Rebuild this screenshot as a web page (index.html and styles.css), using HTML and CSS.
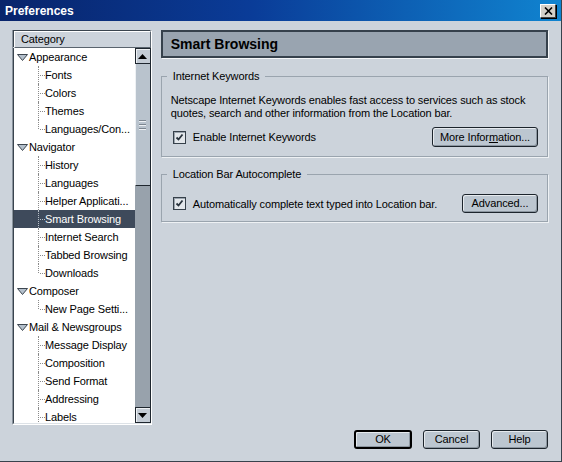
FILE: index.html
```html
<!DOCTYPE html>
<html>
<head>
<meta charset="utf-8">
<title>Preferences</title>
<link rel="stylesheet" href="styles.css">
</head>
<body>
<div class="window">
  <div class="titlebar">
    <span class="title">Preferences</span>
    <span class="close"><svg width="9" height="8" viewBox="0 0 9 8"><path d="M1 0.5 L8 7.5 M8 0.5 L1 7.5" stroke="#000" stroke-width="1.6" fill="none"/></svg></span>
  </div>
  <div class="content">
    <div class="main">
      <div class="tree">
        <div class="tree-head">Category</div>
        <div class="tree-body">
          <ul class="items">
            <li class="parent"><svg class="twisty" width="11" height="7" viewBox="0 0 11 7"><polygon points="0.5,0.5 10.5,0.5 5.5,6.5" fill="#b4c0cc" stroke="#3c4650"/></svg>Appearance</li>
            <li class="child">Fonts</li>
            <li class="child">Colors</li>
            <li class="child">Themes</li>
            <li class="child last">Languages/Con...</li>
            <li class="parent"><svg class="twisty" width="11" height="7" viewBox="0 0 11 7"><polygon points="0.5,0.5 10.5,0.5 5.5,6.5" fill="#b4c0cc" stroke="#3c4650"/></svg>Navigator</li>
            <li class="child">History</li>
            <li class="child">Languages</li>
            <li class="child">Helper Applicati...</li>
            <li class="child selected">Smart Browsing</li>
            <li class="child">Internet Search</li>
            <li class="child">Tabbed Browsing</li>
            <li class="child last">Downloads</li>
            <li class="parent"><svg class="twisty" width="11" height="7" viewBox="0 0 11 7"><polygon points="0.5,0.5 10.5,0.5 5.5,6.5" fill="#b4c0cc" stroke="#3c4650"/></svg>Composer</li>
            <li class="child last">New Page Setti...</li>
            <li class="parent"><svg class="twisty" width="11" height="7" viewBox="0 0 11 7"><polygon points="0.5,0.5 10.5,0.5 5.5,6.5" fill="#b4c0cc" stroke="#3c4650"/></svg>Mail &amp; Newsgroups</li>
            <li class="child">Message Display</li>
            <li class="child">Composition</li>
            <li class="child">Send Format</li>
            <li class="child">Addressing</li>
            <li class="child">Labels</li>
          </ul>
          <div class="scrollbar">
            <div class="sb-btn"><svg width="9" height="5" viewBox="0 0 9 5"><polygon points="4.5,0 9,5 0,5" fill="#000"/></svg></div>
            <div class="sb-thumb"><span class="grip"></span><span class="grip"></span><span class="grip"></span></div>
            <div class="sb-track"></div>
            <div class="sb-btn"><svg width="9" height="5" viewBox="0 0 9 5"><polygon points="0,0 9,0 4.5,5" fill="#000"/></svg></div>
          </div>
        </div>
      </div>
      <div class="panel">
        <div class="panel-head">Smart Browsing</div>
        <fieldset class="group g1">
          <legend>Internet Keywords</legend>
          <p class="desc">Netscape Internet Keywords enables fast access to services such as stock<br>quotes, search and other information from the Location bar.</p>
          <div class="row r1">
            <span class="check"><span class="box"><svg width="9" height="9" viewBox="0 0 9 9"><path d="M1.5 4.5 L3.5 6.5 L7.5 1.5" stroke="#28323c" stroke-width="1.8" fill="none"/></svg></span>Enable Internet Keywords</span>
            <button class="btn more">More Infor<u>m</u>ation...</button>
          </div>
        </fieldset>
        <fieldset class="group g2">
          <legend>Location Bar Autocomplete</legend>
          <div class="row r2">
            <span class="check"><span class="box"><svg width="9" height="9" viewBox="0 0 9 9"><path d="M1.5 4.5 L3.5 6.5 L7.5 1.5" stroke="#28323c" stroke-width="1.8" fill="none"/></svg></span>Automatically complete text typed into Location bar.</span>
            <button class="btn adv">Advanced...</button>
          </div>
        </fieldset>
      </div>
    </div>
    <div class="footer">
      <button class="btn default">OK</button>
      <button class="btn">Cancel</button>
      <button class="btn">Help</button>
    </div>
  </div>
</div>
</body>
</html>
```

FILE: styles.css
```css
html, body {
  margin: 0;
  padding: 0;
}
body {
  width: 562px;
  height: 462px;
  overflow: hidden;
  font-family: "Liberation Sans", Arial, sans-serif;
  font-size: 11px;
  letter-spacing: -0.12px;
  color: #000;
}
.window {
  width: 562px;
  height: 462px;
  box-sizing: border-box;
  background: #ccd3db;
  border-right: 1px solid #38424c;
  border-bottom: 1px solid #38424c;
  display: flex;
  flex-direction: column;
}
.titlebar {
  height: 21px;
  flex: none;
  background: linear-gradient(to right, #08246b 0%, #0a3c98 45%, #1084d0 100%);
  display: flex;
  align-items: center;
  justify-content: space-between;
  padding: 0 4px 0 5px;
}
.title {
  color: #fff;
  font-weight: bold;
  font-size: 12px;
  letter-spacing: 0;
}
.close {
  width: 16px;
  height: 14px;
  box-sizing: border-box;
  background: #d4d0c8;
  border: 1px solid;
  border-color: #fff #404040 #404040 #fff;
  box-shadow: 1px 1px 0 #000;
  display: flex;
  align-items: center;
  justify-content: center;
  margin-right: 1px;
}
.content {
  flex: 1;
  padding: 9px 13px 0 12px;
  display: flex;
  flex-direction: column;
}
.main {
  display: flex;
  gap: 9px;
  height: 395px;
}
.tree {
  width: 140px;
  box-sizing: border-box;
  border: 1px solid;
  border-color: #8a949e #fff #fff #8a949e;
  display: flex;
  flex-direction: column;
}
.tree-head {
  height: 15px;
  line-height: 15px;
  padding-left: 6px;
  background: #ccd3db;
  border: 1px solid;
  border-color: #fff #5a646e #5a646e #fff;
  box-shadow: -1px -1px 0 #3a444e;
  margin-left: 1px;
  font-size: 11px;
}
.tree-body {
  flex: 1;
  display: flex;
  min-height: 0;
  border-left: 1px solid #3a444e;
  border-bottom: 1px solid #dde2e7;
  background: #fff;
}
.items {
  list-style: none;
  margin: 0;
  padding: 0;
  flex: 1;
  overflow: hidden;
}
.items li {
  height: 18px;
  line-height: 18px;
  white-space: nowrap;
  position: relative;
}
.parent {
  display: flex;
  align-items: center;
}
.twisty {
  margin: 0 1px 0 3px;
  flex: none;
}
.child {
  padding-left: 31px;
}
.child::before {
  content: "";
  position: absolute;
  left: 24px;
  top: 0;
  height: 18px;
  border-left: 1px dotted #8a8a8a;
}
.child.last::before {
  height: 9px;
}
.child::after {
  content: "";
  position: absolute;
  left: 26px;
  top: 9px;
  width: 5px;
  border-top: 1px dotted #8a8a8a;
}
.child.selected {
  background: #3e4a5b;
  color: #fff;
}
.child.selected::before, .child.selected::after {
  border-color: #b8c0c8;
}
.scrollbar {
  width: 16px;
  display: flex;
  flex-direction: column;
  flex: none;
}
.sb-btn {
  height: 16px;
  box-sizing: border-box;
  background: #c4ccd5;
  border: 1px solid #1e262e;
  box-shadow: inset 1px 1px 0 #eef1f4;
  display: flex;
  align-items: center;
  justify-content: center;
  flex: none;
}
.sb-thumb {
  height: 122px;
  box-sizing: border-box;
  background: #b9c3cd;
  border-left: 1px solid #eef1f4;
  border-right: 1px solid #1e262e;
  border-bottom: 1px solid #1e262e;
  display: flex;
  flex-direction: column;
  align-items: center;
  justify-content: center;
  gap: 2px;
  flex: none;
}
.grip {
  width: 7px;
  height: 0;
  border-top: 1px solid #7c8690;
  border-bottom: 1px solid #eef1f4;
}
.sb-track {
  flex: 1;
  background: #98a2ac;
  border-right: 1px solid #1e262e;
}
.panel {
  width: 388px;
  display: flex;
  flex-direction: column;
}
.panel-head {
  height: 28px;
  box-sizing: border-box;
  background: #99a4b0;
  border: 2px solid #36414c;
  box-shadow: 1px 1px 0 #f4f6f8;
  padding-left: 8px;
  font-weight: bold;
  font-size: 14px;
  letter-spacing: 0;
  line-height: 24px;
}
.group {
  margin: 0;
  border: 1px solid #9aa4ae;
  box-shadow: 1px 1px 0 #eef1f4;
  padding: 0 9px 0 11px;
  min-width: 0;
}
.group legend {
  padding: 0 6px;
  margin-left: -6px;
  line-height: 13px;
  height: 13px;
}
.g1 {
  margin-top: 12px;
  padding-top: 11px;
  padding-bottom: 9px;
}
.g2 {
  margin-top: 11px;
  padding-top: 13px;
  padding-bottom: 8px;
}
.desc {
  margin: 0 0 0 -2px;
  line-height: 13px;
}
.row {
  display: flex;
  align-items: center;
  justify-content: space-between;
}
.r1 {
  margin-top: 7px;
  height: 20px;
}
.r2 {
  height: 19px;
}
.check {
  display: flex;
  align-items: center;
}
.box {
  width: 13px;
  height: 13px;
  box-sizing: border-box;
  border: 1px solid #36404a;
  background: #e3e7eb;
  box-shadow: inset 1px 1px 0 #9aa4ae;
  margin-right: 7px;
  display: flex;
  align-items: center;
  justify-content: center;
}
.btn {
  font-family: "Liberation Sans", Arial, sans-serif;
  font-size: 11px;
  letter-spacing: -0.12px;
  color: #000;
  background: #bcc6d0;
  border: 1px solid #1c242c;
  border-radius: 3px;
  box-shadow: inset 1px 1px 0 #e6eaee, inset -1px -1px 0 #8c96a0;
  padding: 0;
  height: 19px;
  box-sizing: border-box;
  line-height: 15px;
}
.btn u {
  text-decoration: underline;
}
.more {
  width: 106px;
  height: 20px;
}
.adv {
  width: 76px;
}
.footer {
  display: flex;
  justify-content: flex-end;
  gap: 11px;
  margin-top: 5px;
}
.footer .btn {
  width: 57px;
}
.footer .btn.default {
  border: 2px solid #000;
  width: 58px;
}
```
